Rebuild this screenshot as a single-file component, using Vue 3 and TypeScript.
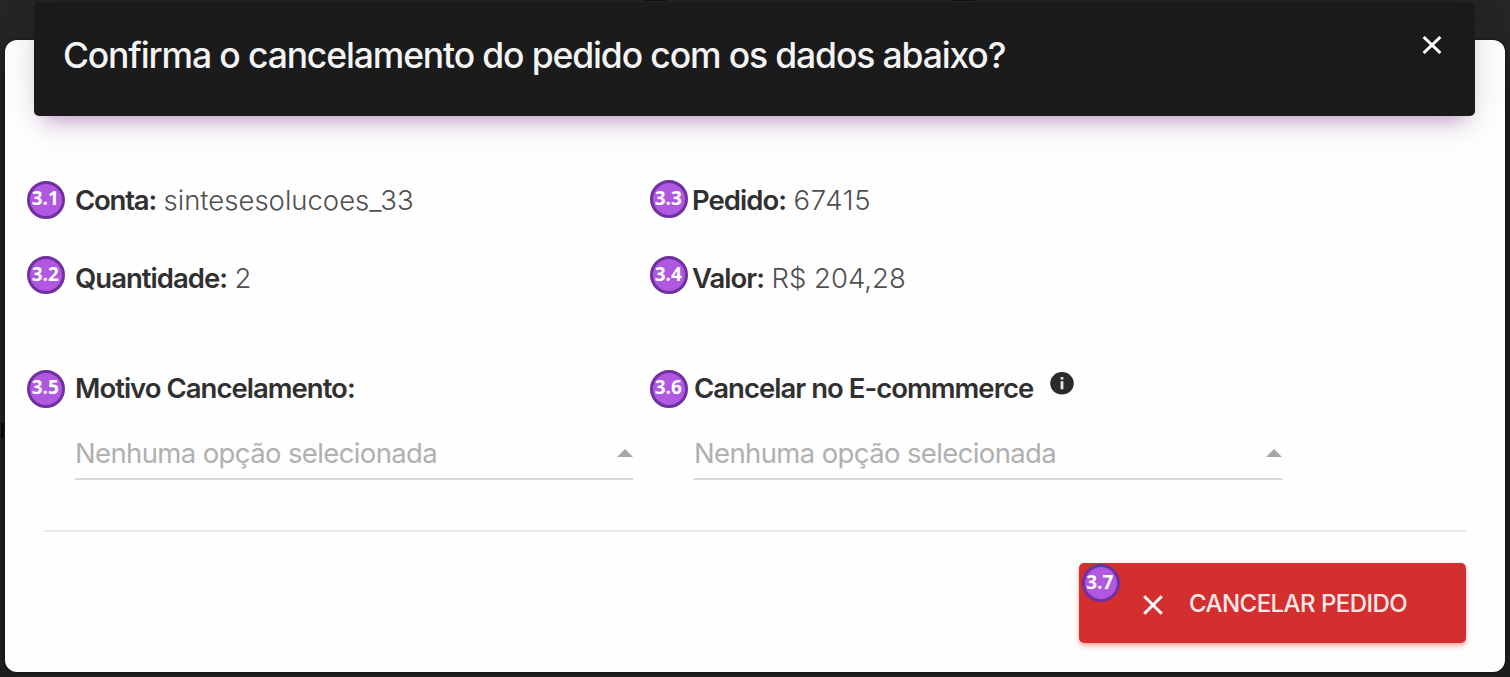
<script setup lang="ts">
interface Detail {
  step: string
  label: string
  value: string
  key: string
}

interface Choice {
  step: string
  label: string
  info: boolean
  key: string
}

const details: Detail[] = [
  { step: '3.1', label: 'Conta:', value: 'sintesesolucoes_33', key: 'conta' },
  { step: '3.3', label: 'Pedido:', value: '67415', key: 'pedido' },
  { step: '3.2', label: 'Quantidade:', value: '2', key: 'quantidade' },
  { step: '3.4', label: 'Valor:', value: 'R$ 204,28', key: 'valor' },
]

const choices: Choice[] = [
  { step: '3.5', label: 'Motivo Cancelamento:', info: false, key: 'motivo' },
  { step: '3.6', label: 'Cancelar no E-commmerce', info: true, key: 'ecommerce' },
]
</script>

<template>
  <div class="backdrop">
    <section class="modal">
      <header class="modal-header">
        <h1 class="title">Confirma o cancelamento do pedido com os dados abaixo?</h1>
        <button class="close" type="button" aria-label="Fechar">
          <svg width="20" height="18" viewBox="0 0 20 18"><path d="M1.6 1 18.4 17M18.4 1 1.6 17" /></svg>
        </button>
      </header>

      <div class="details">
        <div v-for="d in details" :key="d.key" class="detail" :class="d.key">
          <span class="badge">{{ d.step }}</span>
          <span class="label">{{ d.label }}</span>
          <span class="value">{{ d.value }}</span>
        </div>
      </div>

      <div class="choices">
        <div v-for="c in choices" :key="c.key" class="choice" :class="c.key">
          <div class="choice-head">
            <span class="badge">{{ c.step }}</span>
            <span class="label">{{ c.label }}</span>
            <svg v-if="c.info" class="info" width="24" height="23" viewBox="0 0 24 23">
              <ellipse cx="12" cy="11.3" rx="11.8" ry="11.2" fill="#2b2b2b" />
              <path d="M10.6 5h2.8v2.5h-2.8zM10.6 9.3h2.8v8h-2.8z" fill="#e6e6e6" />
            </svg>
          </div>
          <div class="select">
            <span class="placeholder">Nenhuma opção selecionada</span>
            <svg class="caret" width="16" height="8" viewBox="0 0 16 8"><path d="M0 8 8 0l8 8z" /></svg>
          </div>
        </div>
      </div>

      <footer class="modal-footer">
        <button class="cancel" type="button">
          <span class="badge">3.7</span>
          <svg width="20" height="20" viewBox="0 0 20 20"><path d="M1.2 1.2 18.8 18.8M18.8 1.2 1.2 18.8" /></svg>
          <span class="cancel-text">Cancelar pedido</span>
        </button>
      </footer>
    </section>
  </div>
</template>

<style>
body {
  margin: 0;
  overflow: hidden;
}
</style>

<style scoped>
.backdrop {
  box-sizing: border-box;
  width: 1510px;
  height: 677px;
  padding: 40px 5px 5px;
  background:
    linear-gradient(#07161d, #07161d) 643px 0 / 24px 1px no-repeat,
    linear-gradient(#07161d, #07161d) 951px 0 / 24px 1px no-repeat,
    linear-gradient(#080808, #080808) 1px 423px / 3px 15px no-repeat,
    linear-gradient(#252525 0, #252525 40px, #1d1d1d 90px);
  font-family: Inter, 'Liberation Sans', sans-serif;
}

.modal {
  display: flex;
  flex-direction: column;
  width: 1500px;
  height: 632px;
  border-radius: 12px;
  background: #fefefe;
  box-shadow: 0 0 3px #0e0e0e;
}

.modal-header {
  display: flex;
  flex: none;
  justify-content: space-between;
  box-sizing: border-box;
  width: 1441px;
  height: 114px;
  margin: -38.5px 0 0 29.4px;
  padding: 0 33px 0 28.5px;
  border-radius: 5px;
  background: #1b1b1b;
  box-shadow: 0 8px 40px -4px rgba(0, 0, 0, 0.14), 0 13px 18px -10px rgba(156, 39, 176, 0.4);
}

.title {
  margin: 0;
  color: #f4f4f4;
  font-size: 35.5px;
  font-weight: 450;
  letter-spacing: -1.14px;
  line-height: 107px;
  white-space: nowrap;
}

.close {
  height: 18px;
  margin: 34px 0 0;
  padding: 0;
  border: 0;
  background: none;
}

.close svg,
.cancel svg {
  display: block;
  fill: none;
  stroke: #fff;
  stroke-width: 3;
}

.details {
  display: grid;
  flex: none;
  grid-template-columns: 617px 1fr;
  grid-template-rows: 78px 78px;
  margin: 45.5px 0 0 70px;
}

.detail,
.choice-head {
  position: relative;
  display: flex;
  align-items: center;
  gap: 7.5px;
  font-size: 27.5px;
  white-space: nowrap;
}

.label {
  color: #303030;
  font-weight: 600;
  letter-spacing: -0.98px;
}

.conta .label {
  letter-spacing: -1.2px;
}

.value {
  color: #505050;
  font-weight: 300;
}

.pedido .value {
  letter-spacing: 0.7px;
}

.badge {
  position: absolute;
  left: -48px;
  top: 50%;
  box-sizing: border-box;
  width: 38px;
  height: 38px;
  margin-top: -20px;
  padding-right: 1.5px;
  border: 3px solid #7030a0;
  border-radius: 50%;
  background: #b058e0;
  color: #fff;
  font-family: 'Open Sans', 'Noto Sans', sans-serif;
  font-size: 19px;
  font-weight: 700;
  letter-spacing: 0;
  line-height: 30px;
  text-align: center;
}

.conta .badge {
  margin-top: -19px;
  line-height: 28px;
}

.quantidade .badge,
.valor .badge {
  margin-top: -22px;
}

.pedido .badge,
.valor .badge {
  left: -42px;
}

.ecommerce .badge {
  left: -44px;
}

.motivo .badge,
.ecommerce .badge {
  margin-top: -18px;
  line-height: 28px;
}

.choices {
  display: grid;
  flex: none;
  grid-template-columns: 558px 588px;
  column-gap: 61px;
  margin: 51px 0 0 70px;
}

.choice-head {
  height: 40px;
}

.info {
  margin: -10px 0 0 9.5px;
}

.select {
  display: flex;
  align-items: center;
  justify-content: space-between;
  height: 50px;
  margin-top: 20px;
  border-bottom: 2px solid #d8d8d8;
  color: #b0b0b0;
  font-size: 27.5px;
  white-space: nowrap;
}

.placeholder {
  letter-spacing: -0.63px;
}

.caret {
  fill: #a6a6a6;
}

.modal-footer {
  display: flex;
  justify-content: flex-end;
  margin: 50px 39px 0;
  padding-top: 31px;
  border-top: 2px solid #e9e9e9;
}

.cancel {
  position: relative;
  display: flex;
  align-items: center;
  box-sizing: border-box;
  width: 387.5px;
  height: 79.5px;
  padding: 4px 0 0 64.5px;
  border: 0;
  border-radius: 5px;
  background: #d32f2f;
  box-shadow: 0 3px 5px rgba(244, 67, 54, 0.45);
  color: #fff;
  font-family: inherit;
}

.cancel .badge {
  top: 1px;
  left: 3px;
  margin: 0;
}

.cancel-text {
  margin: -3px 0 0 26px;
  color: #fbe9e9;
  font-size: 24px;
  font-weight: 450;
  letter-spacing: -0.55px;
  text-transform: uppercase;
  white-space: nowrap;
}
</style>
